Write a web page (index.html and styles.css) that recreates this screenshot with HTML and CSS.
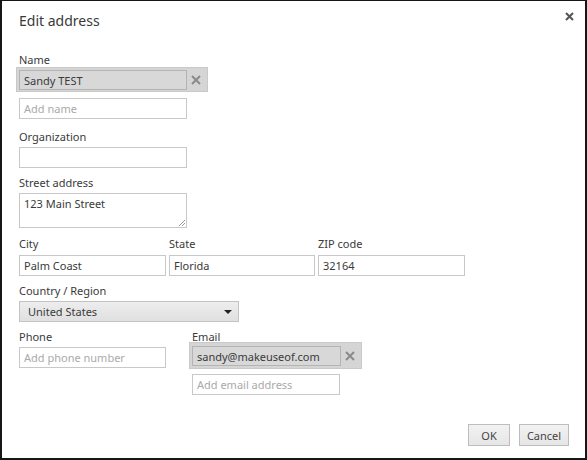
FILE: index.html
```html
<!DOCTYPE html>
<html>
<head>
<meta charset="utf-8">
<link rel="stylesheet" href="styles.css">
</head>
<body>
<div class="dialog">
  <div class="title">Edit address</div>
  <button class="close" aria-label="Close">
    <svg width="9" height="9" viewBox="0 0 9 9"><path d="M1 1L8 8M8 1L1 8" stroke="#555" stroke-width="2"/></svg>
  </button>

  <div class="label l-name">Name</div>
  <div class="filled w-name">
    <div class="input filled-input">Sandy TEST</div>
    <span class="x"><svg width="10" height="10" viewBox="0 0 10 10"><path d="M1 1L9 9M9 1L1 9" stroke="#8a8a8a" stroke-width="2"/></svg></span>
  </div>
  <div class="input placeholder w168 m6">Add name</div>

  <div class="label l-gap10">Organization</div>
  <div class="input w168"></div>

  <div class="label l-gap7">Street address</div>
  <div class="input textarea w168">123 Main Street<span class="grip"></span></div>

  <div class="row3 l-gap8">
    <div class="col"><div class="label">City</div><div class="input">Palm Coast</div></div>
    <div class="col"><div class="label">State</div><div class="input">Florida</div></div>
    <div class="col"><div class="label">ZIP code</div><div class="input">32164</div></div>
  </div>

  <div class="label l-gap7">Country / Region</div>
  <div class="select">United States<span class="caret"></span></div>

  <div class="row2">
    <div class="col phone">
      <div class="label">Phone</div>
      <div class="input placeholder">Add phone number</div>
    </div>
    <div class="col email">
      <div class="label">Email</div>
      <div class="filled w-email">
        <div class="input filled-input">sandy@makeuseof.com</div>
        <span class="x"><svg width="10" height="10" viewBox="0 0 10 10"><path d="M1 1L9 9M9 1L1 9" stroke="#8a8a8a" stroke-width="2"/></svg></span>
      </div>
      <div class="input placeholder m5">Add email address</div>
    </div>
  </div>

  <div class="buttons">
    <button class="btn ok">OK</button>
    <button class="btn cancel">Cancel</button>
  </div>
</div>
</body>
</html>
```

FILE: styles.css
```css
* { box-sizing: border-box; }
html, body { margin: 0; padding: 0; background: #fff; }
body { width: 587px; height: 460px; overflow: hidden; }
.dialog {
  position: relative;
  width: 587px;
  height: 460px;
  border: 2px solid #161616;
  border-top-width: 1px;
  padding: 10px 0 0 17px;
  font-family: "Noto Sans", "Open Sans", sans-serif;
  font-size: 11px;
  color: #3a3a3a;
  display: flex;
  flex-direction: column;
  align-items: flex-start;
}
.title { font-size: 14px; line-height: 20px; color: #3a3a3a; }
.close {
  position: absolute; top: 9px; right: 9px;
  width: 13px; height: 13px; padding: 2px; border: 0; background: none;
  display: flex; align-items: center; justify-content: center;
}
.label { line-height: 15px; margin-bottom: 3px; white-space: nowrap; }
.l-name { margin-top: 21px; margin-bottom: 0; }
.l-gap10 { margin-top: 10px; }
.l-gap7 { margin-top: 7px; }
.l-gap8 { margin-top: 8px; }
.input {
  height: 21px;
  border: 1px solid #c8c8c8;
  background: #fff;
  padding: 0 4px;
  line-height: 19px;
  white-space: nowrap;
  overflow: hidden;
}
.placeholder { color: #aaa; }
.w168 { width: 168px; }
.m6 { margin-top: 6px; }
.m5 { margin-top: 5px; }
.filled {
  display: flex; align-items: center;
  background: #d5d5d5;
  border: 1px solid #c9c9c9;
  padding: 2px;
  margin-left: -3px;
}
.w-name { width: 192px; height: 25px; }
.w-email { width: 173px; height: 27px; }
.filled-input { background: #d8d8d8; border-color: #b4b4b4; width: 168px; height: 20px; }
.w-email .filled-input { width: 149px; }
.x { flex: 1; display: flex; justify-content: center; align-items: center; }
.textarea { height: 35px; line-height: 20px; position: relative; }
.grip {
  position: absolute; right: 1px; bottom: 1px; width: 6px; height: 6px;
  background: linear-gradient(135deg, transparent 45%, #999 45%, #999 55%, transparent 55%, transparent 70%, #999 70%, #999 80%, transparent 80%);
}
.row3 { display: grid; grid-template-columns: 147px 146px 147px; column-gap: 3px; }
.row3 .label { margin-bottom: 4px; }
.select {
  width: 220px; height: 21px;
  border: 1px solid #c3c3c3;
  background: linear-gradient(#ededed, #e0e0e0);
  padding: 0 8px;
  line-height: 19px;
  position: relative;
}
.caret {
  position: absolute; right: 6px; top: 8px;
  border-left: 4px solid transparent; border-right: 4px solid transparent;
  border-top: 4px solid #222;
}
.row2 { display: flex; margin-top: 7px; column-gap: 26px; }
.phone { width: 147px; }
.email { width: 148px; }
.email .label { margin-bottom: -2px; }
.buttons {
  position: absolute; right: 16px; bottom: 12px;
  display: flex; column-gap: 9px;
}
.btn {
  height: 22px;
  border: 1px solid #bdbdbd;
  background: linear-gradient(#f2f2f2, #e6e6e6);
  font-family: "Noto Sans", "Open Sans", sans-serif;
  font-size: 11px;
  color: #444;
  padding: 0;
}
.ok { width: 42px; }
.cancel { width: 50px; }
```
